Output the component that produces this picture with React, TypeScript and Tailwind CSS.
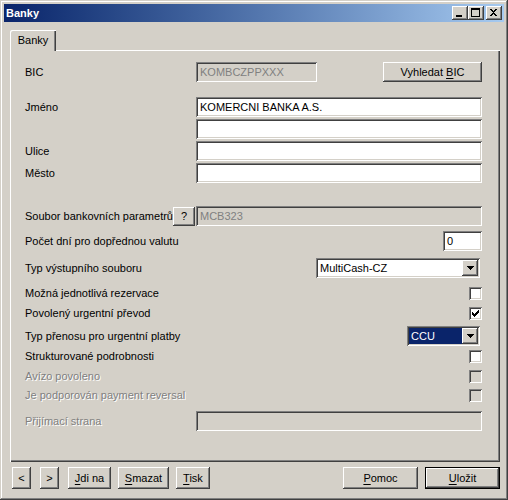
import React from 'react';

const SUNKEN = 'shadow-[inset_1px_1px_#808080,inset_-1px_-1px_#ffffff,inset_2px_2px_#404040,inset_-2px_-2px_#d4d0c8]';
const RAISED = 'shadow-[inset_-1px_-1px_#404040,inset_1px_1px_#ffffff,inset_-2px_-2px_#808080,inset_2px_2px_#d4d0c8]';

const U: React.FC<{ children: React.ReactNode }> = ({ children }) => (
  <span className="underline underline-offset-[2px]">{children}</span>
);

const Field: React.FC<{ className?: string; value?: string; disabled?: boolean }> = ({ className = '', value = '', disabled }) => (
  <div
    className={`${SUNKEN} h-[20px] pl-[4px] flex items-center whitespace-nowrap overflow-hidden ${
      disabled ? 'bg-[#d4d0c8] text-[#808080]' : 'bg-white text-black'
    } ${className}`}
  >
    {value}
  </div>
);

const Check: React.FC<{ checked?: boolean; disabled?: boolean }> = ({ checked, disabled }) => (
  <div className={`${SUNKEN} w-[13px] h-[13px] shrink-0 flex items-center justify-center ${disabled ? 'bg-[#d4d0c8]' : 'bg-white'}`}>
    {checked && (
      <svg width="7" height="7" viewBox="0 0 7 7" shapeRendering="crispEdges">
        <path d="M0 2h1v1h1v1h1v-1h1v-1h1v-1h1v-1h1v3h-1v1h-1v1h-1v1h-1v1h-1v-1h-1v-1h-1z" fill="#000" />
      </svg>
    )}
  </div>
);

const Arrow = () => (
  <svg width="7" height="4" viewBox="0 0 7 4" shapeRendering="crispEdges">
    <path d="M0 0h7v1h-1v1h-1v1h-1v1h-1v-1h-1v-1h-1v-1h-1z" fill="#000" />
  </svg>
);

const Select: React.FC<{ className?: string; value: string; focused?: boolean }> = ({ className = '', value, focused }) => (
  <div className={`${SUNKEN} bg-white h-[20px] p-[2px] flex ${className}`}>
    <div
      className={`flex-1 flex items-center pl-[2px] whitespace-nowrap ${
        focused ? 'bg-[#0a246a] text-white' : 'text-black'
      }`}
    >
      {value}
    </div>
    <div className={`${RAISED} w-[16px] h-full bg-[#d4d0c8] flex items-center justify-center`}>
      <Arrow />
    </div>
  </div>
);

const Btn: React.FC<{ className?: string; children: React.ReactNode }> = ({ className = '', children }) => (
  <div className={`${RAISED} bg-[#d4d0c8] flex items-center justify-center text-black whitespace-nowrap ${className}`}>
    <span>{children}</span>
  </div>
);

const Label: React.FC<{ children: React.ReactNode; disabled?: boolean; className?: string }> = ({ children, disabled, className = '' }) => (
  <div
    className={`whitespace-nowrap ${
      disabled ? 'text-[#808080] [text-shadow:1px_1px_0_#ffffff]' : 'text-black'
    } ${className}`}
  >
    {children}
  </div>
);

const TitleBtn: React.FC<{ kind: 'min' | 'max' | 'close'; className?: string }> = ({ kind, className = '' }) => (
  <div className={`${RAISED} bg-[#d4d0c8] w-[16px] h-[14px] flex items-center justify-center ${className}`}>
    <svg width="16" height="14" viewBox="0 0 16 14" shapeRendering="crispEdges">
      {kind === 'min' && <rect x="4" y="9" width="6" height="2" fill="#000" />}
      {kind === 'max' && (
        <path d="M3 2h9v9h-9zM4 4v6h7v-6z" fill="#000" fillRule="evenodd" />
      )}
      {kind === 'close' && (
        <path
          d="M4 3h2v1h1v1h1v-1h1v-1h2v1h-1v1h-1v1h-1v1h1v1h1v1h1v1h-2v-1h-1v-1h-1v1h-1v1h-2v-1h1v-1h1v-1h1v-1h-1v-1h-1v-1h-1z"
          fill="#000"
        />
      )}
    </svg>
  </div>
);

export default function App() {
  return (
    <div className="w-[508px] h-[500px] bg-[#d4d0c8] p-[4px] flex flex-col shadow-[inset_-1px_-1px_#404040,inset_1px_1px_#d4d0c8,inset_-2px_-2px_#808080,inset_2px_2px_#ffffff] font-['Liberation_Sans',Arial,sans-serif] text-[11px] text-black select-none">
      {/* title bar */}
      <div className="h-[18px] shrink-0 bg-linear-to-r from-[#0a246a] to-[#a6caf0] flex items-center pl-[2px] pr-[2px]">
        <div className="text-white font-bold text-[11px] leading-none">Banky</div>
        <div className="ml-auto flex items-center">
          <TitleBtn kind="min" />
          <TitleBtn kind="max" />
          <TitleBtn kind="close" className="ml-[2px]" />
        </div>
      </div>

      {/* client */}
      <div className="flex-1 flex flex-col">
        <div className="mt-[8px] ml-[6px] flex">
          <div className="relative z-10 w-[46px] h-[21px] -mb-[1px] bg-[#d4d0c8] shadow-[inset_1px_1px_#ffffff,inset_-1px_0_#404040,inset_-2px_0_#808080] rounded-tl-[2px] flex items-center justify-center pb-[1px]">
            Banky
          </div>
        </div>

        <div className="ml-[6px] w-[490px] h-[412px] shrink-0 shadow-[inset_1px_1px_#ffffff,inset_-1px_-1px_#404040,inset_-2px_-2px_#808080] pl-[15px] pr-[18px] flex flex-col">
          {/* BIC */}
          <div className="mt-[12px] h-[20px] flex items-center">
            <Label className="w-[171px]">BIC</Label>
            <Field className="w-[121px]" value="KOMBCZPPXXX" disabled />
            <Btn className="ml-auto w-[99px] h-[20px]">
              Vyhledat <U>B</U>IC
            </Btn>
          </div>

          <div className="mt-[15px] h-[20px] flex items-center">
            <Label className="w-[171px]">Jméno</Label>
            <Field className="flex-1" value="KOMERCNI BANKA A.S." />
          </div>
          <div className="mt-[2px] h-[20px] flex items-center">
            <div className="w-[171px]" />
            <Field className="flex-1" />
          </div>
          <div className="mt-[2px] h-[20px] flex items-center">
            <Label className="w-[171px]">Ulice</Label>
            <Field className="flex-1" />
          </div>
          <div className="mt-[2px] h-[20px] flex items-center">
            <Label className="w-[171px]">Město</Label>
            <Field className="flex-1" />
          </div>

          <div className="mt-[23px] h-[20px] flex items-center">
            <div className="w-[171px] flex items-center">
              <Label>Soubor bankovních parametrů</Label>
              <Btn className="ml-auto mr-[1px] w-[22px] h-[19px]">?</Btn>
            </div>
            <Field className="flex-1" value="MCB323" disabled />
          </div>

          <div className="mt-[5px] h-[20px] flex items-center">
            <Label className="flex-1">Počet dní pro dopřednou valutu</Label>
            <Field className="w-[39px]" value="0" />
          </div>

          <div className="mt-[7px] h-[20px] flex items-center">
            <Label className="flex-1">Typ výstupního souboru</Label>
            <Select className="w-[164px] mr-[2px]" value="MultiCash-CZ" />
          </div>

          <div className="mt-[9px] h-[13px] flex items-center">
            <Label className="flex-1">Možná jednotlivá rezervace</Label>
            <Check />
          </div>
          <div className="mt-[7px] h-[13px] flex items-center">
            <Label className="flex-1">Povolený urgentní převod</Label>
            <Check checked />
          </div>

          <div className="mt-[6px] h-[20px] flex items-center">
            <Label className="flex-1">Typ přenosu pro urgentní platby</Label>
            <Select className="w-[73px] mr-[2px]" value="CCU" focused />
          </div>

          <div className="mt-[4px] h-[13px] flex items-center">
            <Label className="flex-1">Strukturované podrobnosti</Label>
            <Check />
          </div>
          <div className="mt-[7px] h-[13px] flex items-center">
            <Label className="flex-1" disabled>Avízo povoleno</Label>
            <Check disabled />
          </div>
          <div className="mt-[6px] h-[13px] flex items-center">
            <Label className="flex-1" disabled>Je podporován payment reversal</Label>
            <Check disabled />
          </div>

          <div className="mt-[9px] h-[20px] flex items-center">
            <Label className="w-[171px]" disabled>Přijímací strana</Label>
            <Field className="flex-1" disabled />
          </div>
        </div>

        {/* bottom buttons */}
        <div className="mt-[5px] h-[22px] flex items-center pl-[8px] pr-[4px]">
          <Btn className="w-[19px] h-[22px]">&lt;</Btn>
          <Btn className="ml-[9px] w-[19px] h-[22px]">&gt;</Btn>
          <Btn className="ml-[9px] w-[43px] h-[22px]">
            <U>J</U>di na
          </Btn>
          <Btn className="ml-[7px] w-[51px] h-[22px]">
            <U>S</U>mazat
          </Btn>
          <Btn className="ml-[7px] w-[34px] h-[22px]">
            <U>T</U>isk
          </Btn>
          <Btn className="ml-auto w-[75px] h-[22px]">
            <U>P</U>omoc
          </Btn>
          <div className="ml-[7px] w-[75px] h-[22px] border border-black flex">
            <Btn className="flex-1 h-full">
              <U>U</U>ložit
            </Btn>
          </div>
        </div>
      </div>
    </div>
  );
}
